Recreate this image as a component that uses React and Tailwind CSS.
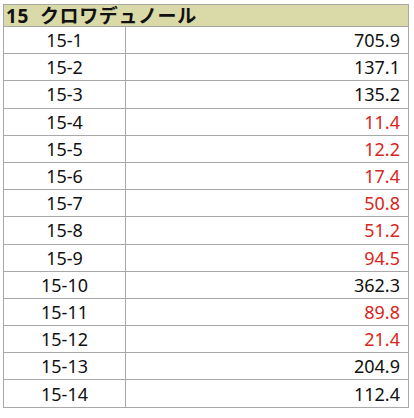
import React from 'react';

const rows = [
  ['15-1', '705.9', false],
  ['15-2', '137.1', false],
  ['15-3', '135.2', false],
  ['15-4', '11.4', true],
  ['15-5', '12.2', true],
  ['15-6', '17.4', true],
  ['15-7', '50.8', true],
  ['15-8', '51.2', true],
  ['15-9', '94.5', true],
  ['15-10', '362.3', false],
  ['15-11', '89.8', true],
  ['15-12', '21.4', true],
  ['15-13', '204.9', false],
  ['15-14', '112.4', false],
];

export default function App() {
  return (
    <div className="w-[414px] h-[418px] bg-white pl-[3px] pt-[4px] font-['Noto_Sans','Noto_Sans_CJK_JP',sans-serif] text-[#111]">
      <table className="w-[406px] border-collapse table-fixed">
        <colgroup>
          <col className="w-[122px]" />
          <col />
        </colgroup>
        <thead>
          <tr className="h-[22px] bg-[#dadaa8]">
            <th colSpan={2} className="border border-[#a8a8a8] pl-[2px] text-left font-bold text-[19px] leading-[20px] tracking-[0.6px]">
              15&nbsp;&nbsp;クロワデュノール
            </th>
          </tr>
        </thead>
        <tbody>
          {rows.map(([no, val, red]) => (
            <tr key={no} className="h-[27.2px]">
              <td className="border border-[#a8a8a8] text-center text-[18px] leading-[24px] p-0">{no}</td>
              <td className={`border border-[#a8a8a8] text-right text-[18px] leading-[24px] p-0 pr-[8px] ${red ? 'text-[#d9261c]' : ''}`}>
                {val}
              </td>
            </tr>
          ))}
        </tbody>
      </table>
    </div>
  );
}
